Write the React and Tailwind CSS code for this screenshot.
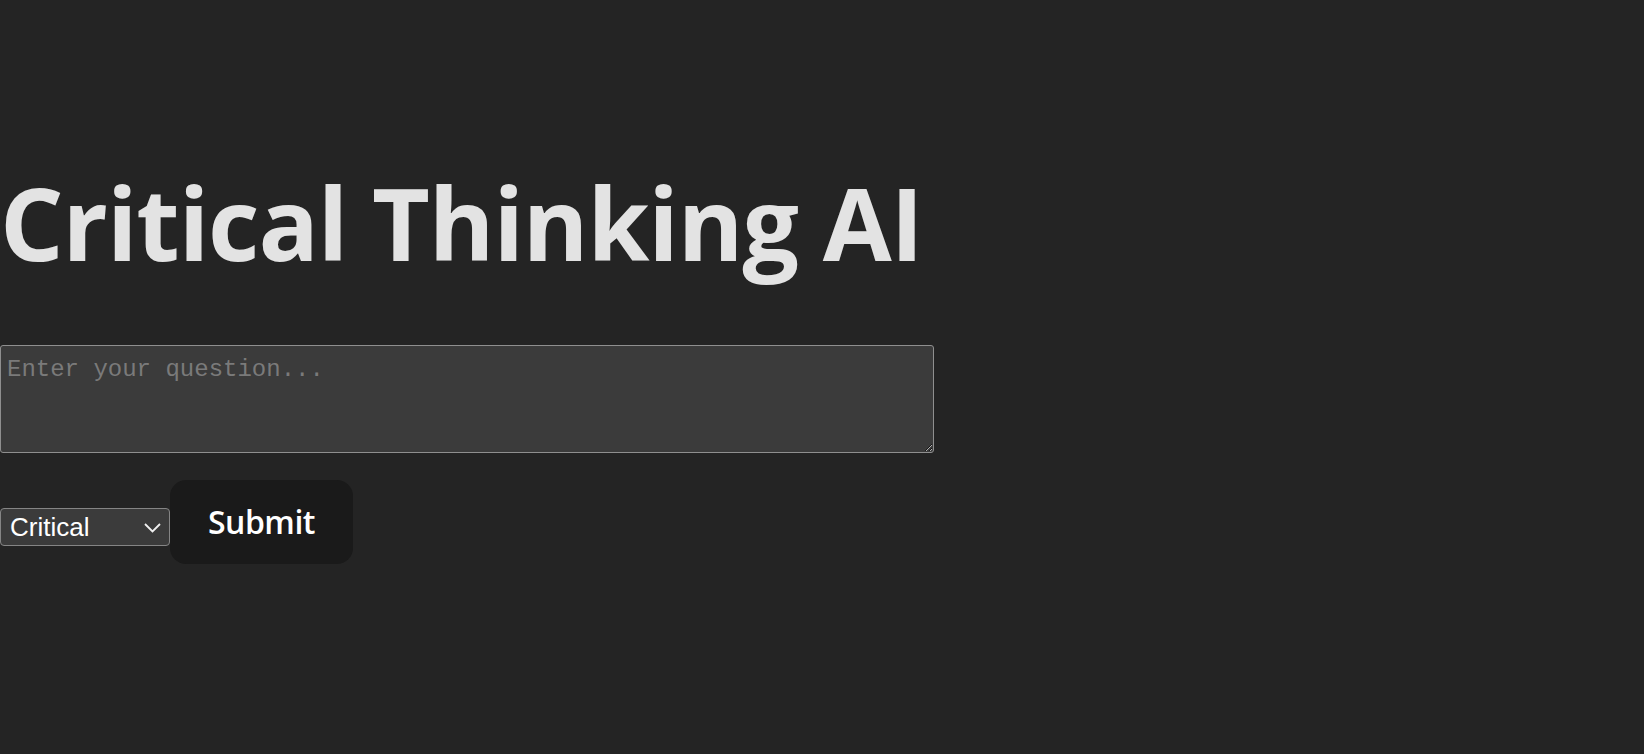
import React, { useState } from "react";

const App = () => {
  const [question, setQuestion] = useState("");
  const [mode, setMode] = useState("critical");

  return (
    <div className="min-h-screen w-full bg-[#242424] text-[#e3e3e3]">
      <div className="flex flex-col items-start pt-[172px]">
        <h1 className="m-0 text-[100px] leading-none font-bold font-['Open_Sans',sans-serif] tracking-[-1.1px] text-[#e3e3e3] whitespace-nowrap">
          Critical Thinking AI
        </h1>

        <textarea
          value={question}
          onChange={(e) => setQuestion(e.target.value)}
          placeholder="Enter your question..."
          className="mt-[73px] w-[934px] h-[108px] bg-[#3b3b3b] border border-[#8f8f8f] rounded-[3px] pt-[10px] pl-[6px] pr-2 text-[24px] leading-[28px] font-['Liberation_Mono',monospace] text-white placeholder:text-[#7a7a7a] outline-none resize"
        />

        <div className="mt-[27px] flex items-start">
          <div className="relative mt-[28px]">
            <select
              value={mode}
              onChange={(e) => setMode(e.target.value)}
              className="appearance-none w-[170px] h-[38px] bg-[#3b3b3b] border border-[#858585] rounded-[4px] pl-[9px] text-[26px] leading-[34px] font-['Liberation_Sans',Arial,sans-serif] text-white outline-none"
            >
              <option value="critical">Critical</option>
              <option value="creative">Creative</option>
              <option value="logical">Logical</option>
            </select>
            <svg
              className="pointer-events-none absolute left-[144px] top-[15px]"
              width="17"
              height="10"
              viewBox="0 0 17 10"
              fill="none"
            >
              <path d="M1 1l7.5 7.5L16 1" stroke="#f0f0f0" strokeWidth="1.8" />
            </svg>
          </div>
          <button className="w-[183px] h-[84px] bg-[#1a1a1a] rounded-[16px] text-[32px] font-semibold font-['Open_Sans',sans-serif] tracking-[-0.5px] text-white cursor-pointer">
            Submit
          </button>
        </div>
      </div>
    </div>
  );
};

export default App;
